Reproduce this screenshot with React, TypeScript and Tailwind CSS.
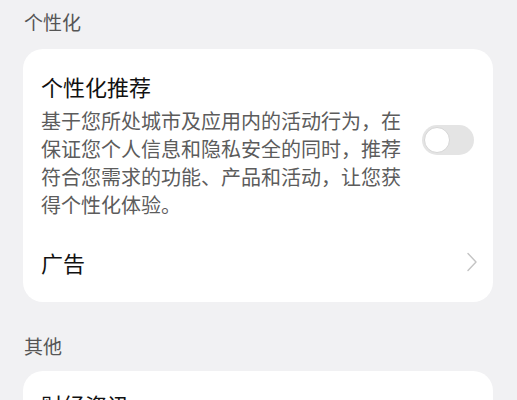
import React from "react";

const font = { fontFamily: '"Noto Sans CJK SC", "Noto Sans", sans-serif' };

export default function App() {
  return (
    <div className="w-[517px] h-[400px] overflow-hidden bg-[#f1f1f3] pl-[23px] pr-[24px]" style={font}>
      <div className="pl-[1px] pt-[8px] text-[19px] leading-[28px] text-[#555555]">个性化</div>
      <div className="mt-[13px] rounded-[20px] bg-white pl-[18px] pr-[19px]">
        <div className="flex items-center justify-between pt-[22px]">
          <div className="w-[362px]">
            <div className="text-[22px] leading-[30px] text-[#111111]">个性化推荐</div>
            <div className="mt-[6px] text-[20px] leading-[28px] text-[#5c5c5c]">
              基于您所处城市及应用内的活动行为，在保证您个人信息和隐私安全的同时，推荐符合您需求的功能、产品和活动，让您获得个性化体验。
            </div>
          </div>
          <div className="mb-[10px] flex h-[30px] w-[52px] items-center rounded-full bg-[#e4e4e4] px-[2px]">
            <div className="h-[26px] w-[26px] rounded-full border border-[#d6d6d6] bg-white" />
          </div>
        </div>
        <div className="flex items-center justify-between pt-[28px] pb-[25px]">
          <div className="text-[22px] leading-[30px] text-[#111111]">广告</div>
          <svg width="12" height="20" viewBox="0 0 12 20" className="mr-[-4px]">
            <path d="M2 1.5 L10 10 L2 18.5" fill="none" stroke="#c4c4c4" strokeWidth="1.4" strokeLinecap="round" strokeLinejoin="round" />
          </svg>
        </div>
      </div>
      <div className="pl-[1px] mt-[30px] text-[19px] leading-[28px] text-[#555555]">其他</div>
      <div className="mt-[11px] rounded-[20px] bg-white pl-[18px] pr-[19px] pt-[18px] pb-[20px]">
        <div className="text-[22px] leading-[30px] text-[#111111]">财经资讯</div>
      </div>
    </div>
  );
}
